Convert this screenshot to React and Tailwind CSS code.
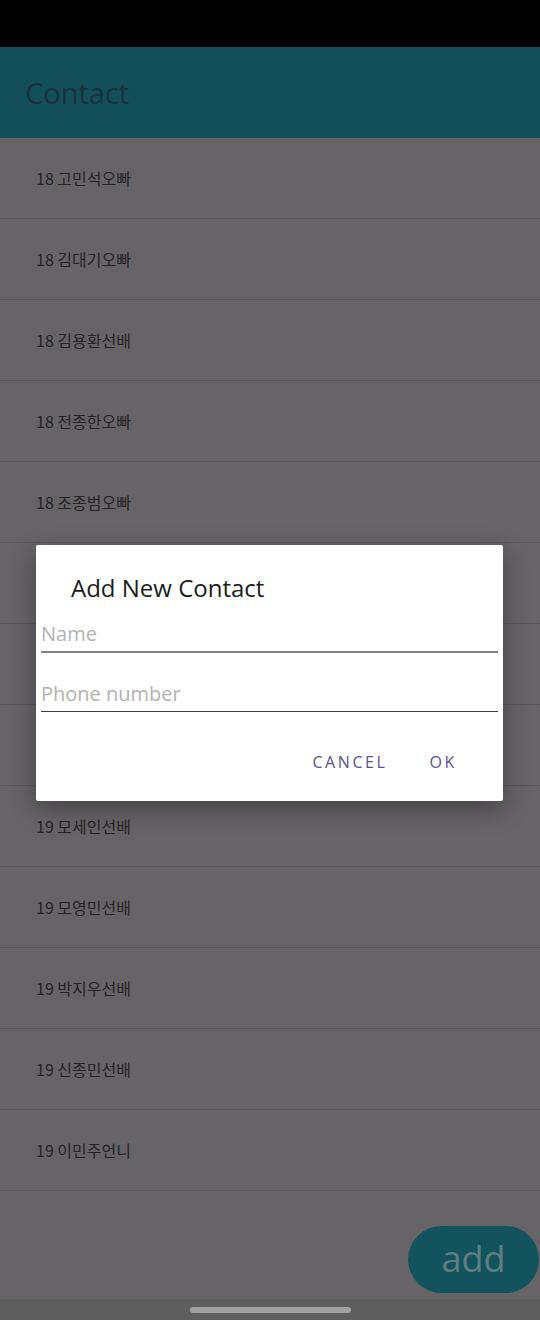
import React from "react";

const contacts = [
  "18 고민석오빠",
  "18 김대기오빠",
  "18 김용환선배",
  "18 전종한오빠",
  "18 조종범오빠",
  "18 최윤정언니",
  "19 강민지선배",
  "19 김태현선배",
  "19 모세인선배",
  "19 모영민선배",
  "19 박지우선배",
  "19 신종민선배",
  "19 이민주언니",
];

function AddContactDialog() {
  return (
    <div className="absolute left-[36px] top-[545px] w-[467px] h-[256px] bg-white rounded-[2px] shadow-[0_8px_24px_rgba(0,0,0,0.35)] flex flex-col font-['Open_Sans',sans-serif]">
      {/* Title */}
      <p className="pt-[27px] pl-[35px] text-[24px] leading-[32px] text-[#1c1c1c]">
        Add New Contact
      </p>

      {/* Inputs */}
      <div className="mx-[5px] mt-[16px] pb-[3px] border-b-2 border-[#808080]">
        <p className="text-[20px] leading-[28px] text-[#b3b3b3]">Name</p>
      </div>
      <div className="mx-[5px] mt-[27px] pb-[3px] border-b-[1.5px] border-[#3e3e3e]">
        <p className="text-[20px] leading-[28px] text-[#b3b3b3]">Phone number</p>
      </div>

      {/* Actions */}
      <div className="mt-[40px] flex justify-end gap-[42px] pr-[46px]">
        <span className="text-[16px] leading-[20px] tracking-[2.6px] text-[#5b528f]">
          CANCEL
        </span>
        <span className="text-[16px] leading-[20px] tracking-[2.6px] text-[#5b528f]">
          OK
        </span>
      </div>
    </div>
  );
}

export default function App() {
  return (
    <div className="relative w-[540px] h-[1320px] overflow-hidden bg-[#666467] flex flex-col">
      {/* Status bar */}
      <div className="h-[47px] bg-black shrink-0"></div>

      {/* App bar */}
      <div className="h-[91px] bg-[#124f59] shrink-0 flex items-center pl-[25px]">
        <h1 className="text-[29px] text-[#17323a] font-['Open_Sans',sans-serif]">
          Contact
        </h1>
      </div>

      {/* Contact list */}
      <ul className="flex flex-col">
        {contacts.map((name) => (
          <li
            key={name}
            className="h-[81px] flex items-center pl-[36px] border-b border-[#59575a] text-[16px] text-[#242325] font-['Noto_Sans_CJK_KR',sans-serif]"
          >
            {name}
          </li>
        ))}
      </ul>

      <div className="flex-1"></div>

      {/* Navigation bar */}
      <div className="h-[21px] bg-[#5f5e5f] shrink-0 flex justify-center pt-[8px]">
        <div className="w-[161px] h-[6px] rounded-full bg-[#a1a1a1]"></div>
      </div>

      {/* Floating add button */}
      <div className="absolute right-[1px] bottom-[27px] w-[131px] h-[67px] rounded-full bg-[#12535d] flex items-center justify-center">
        <span className="text-[36px] leading-none text-[#5f7e81] font-['Open_Sans',sans-serif] pb-[2px]">
          add
        </span>
      </div>

      <AddContactDialog />
    </div>
  );
}
